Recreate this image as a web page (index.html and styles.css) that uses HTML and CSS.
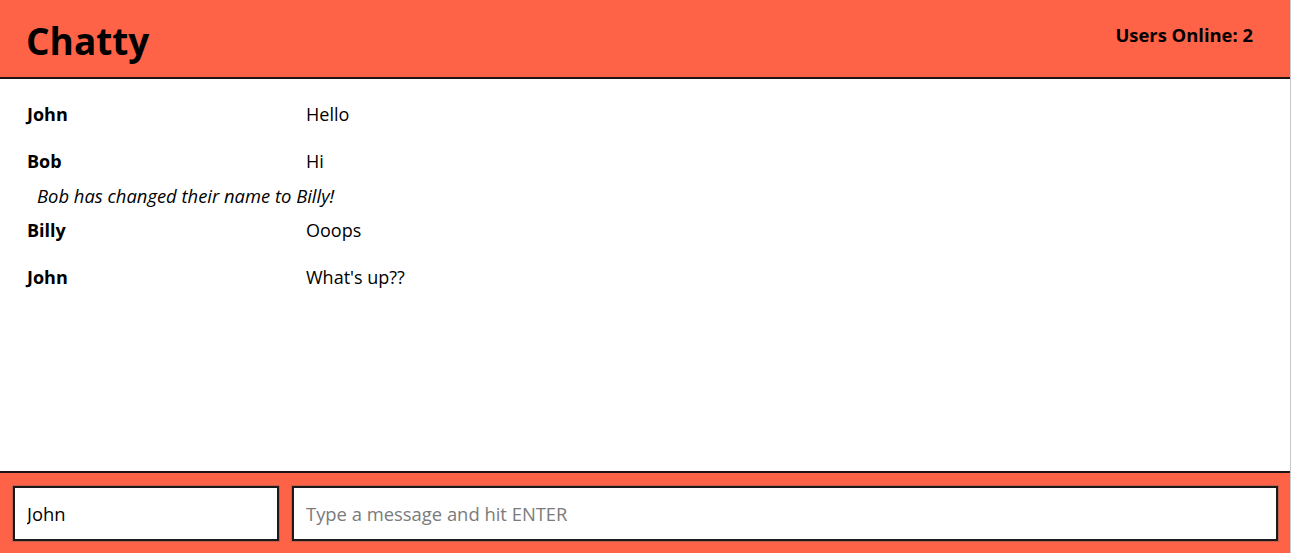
FILE: index.html
```html
<!DOCTYPE html>
<html>
<head>
<meta charset="utf-8">
<link rel="stylesheet" href="styles.css">
</head>
<body>
<div class="app">
  <header class="navbar">
    <h1 class="brand">Chatty</h1>
    <span class="online">Users Online: 2</span>
  </header>
  <main class="messages">
    <div class="message">
      <span class="username">John</span>
      <span class="content">Hello</span>
    </div>
    <div class="message">
      <span class="username">Bob</span>
      <span class="content">Hi</span>
    </div>
    <div class="system">Bob has changed their name to Billy!</div>
    <div class="message">
      <span class="username">Billy</span>
      <span class="content">Ooops</span>
    </div>
    <div class="message">
      <span class="username">John</span>
      <span class="content">What's up??</span>
    </div>
  </main>
  <footer class="chatbar">
    <input class="chatbar-user" type="text" value="John">
    <input class="chatbar-message" type="text" placeholder="Type a message and hit ENTER">
  </footer>
</div>
</body>
</html>
```

FILE: styles.css
```css
html, body {
  margin: 0;
  padding: 0;
  height: 100%;
}

body {
  font-family: "Open Sans", "Liberation Sans", sans-serif;
  font-size: 18px;
  color: #000;
  background: #fff;
}

.app {
  width: 1290px;
  height: 553px;
  border-right: 1px solid #c8c8c8;
  display: flex;
  flex-direction: column;
}

.navbar {
  height: 77px;
  flex: none;
  background: #ff6347;
  border-bottom: 2px solid #1e1414;
  display: flex;
  align-items: center;
  justify-content: space-between;
  padding: 0 37px 0 26px;
}

.brand {
  margin: 0;
  font-size: 37px;
  font-weight: 700;
  line-height: 1;
  position: relative;
  top: 2px;
}

.online {
  font-weight: 700;
  font-size: 18.4px;
  align-self: flex-start;
  margin-top: 22px;
}

.messages {
  flex: 1;
  padding: 11px 0 0 0;
  overflow: hidden;
}

.message {
  display: flex;
  height: 47px;
  align-items: center;
  padding-left: 27px;
  line-height: 22px;
}

.username {
  width: 279px;
  flex: none;
  font-weight: 700;
}

.content {
  flex: 1;
}

.system {
  height: 21px;
  padding-top: 1px;
  line-height: 22px;
  font-style: italic;
  font-size: 18.4px;
  padding-left: 37px;
}

.chatbar {
  flex: none;
  height: 55px;
  background: #ff6347;
  border-top: 2px solid #1e1414;
  display: flex;
  gap: 13px;
  padding: 13px 12px 12px 13px;
}

.chatbar input {
  box-sizing: border-box;
  height: 55px;
  margin: 0;
  border: 2px solid #1a1a1a;
  box-shadow: 0 0 0 1px rgba(90, 90, 90, 0.35);
  background: #fff;
  font-family: "Open Sans", "Liberation Sans", sans-serif;
  font-size: 18.4px;
  padding: 0 12px;
  color: #000;
  outline: none;
}

.chatbar input::placeholder {
  color: #7b7b7b;
}

.chatbar-user {
  width: 266px;
  flex: none;
}

.chatbar-message {
  flex: 1;
  min-width: 0;
}
```
